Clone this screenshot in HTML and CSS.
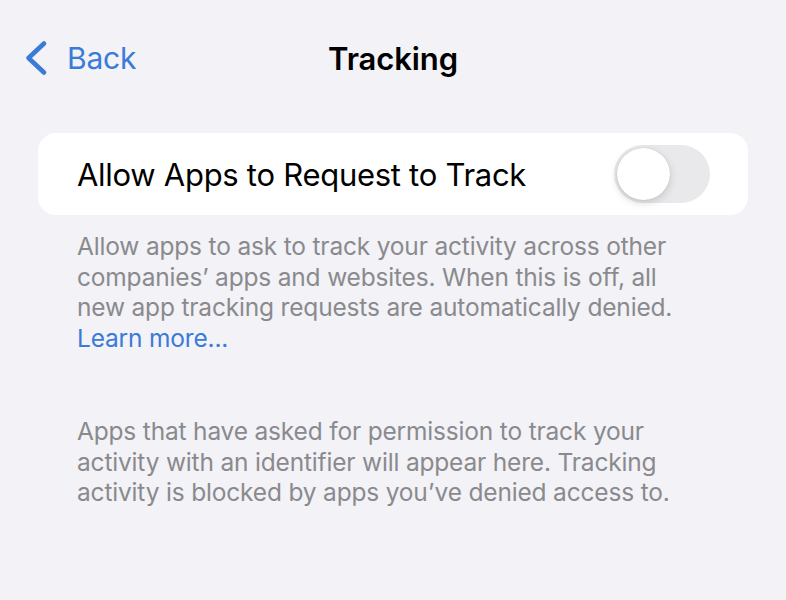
FILE: index.html
```html
<!DOCTYPE html>
<html lang="en">

<head>
	<meta charset="UTF-8">
	<meta name="viewport" content="width=device-width, initial-scale=1.0">
	<title>Tracking</title>
	<link rel="stylesheet" href="styles.css">
</head>

<body>
	<div class="nav">
		<a class="back" href="#">
			<svg class="chevron" width="24" height="36" viewBox="0 0 24 36">
				<polyline points="20,3.5 4.5,18 20,32.5" fill="none" stroke="currentColor" stroke-width="4.6"
					stroke-linecap="round" stroke-linejoin="round" />
			</svg>
			<span>Back</span>
		</a>
		<h1>Tracking</h1>
		<div></div>
	</div>

	<div class="group">
		<div class="row">
			<span class="label">Allow Apps to Request to Track</span>
			<div class="toggle">
				<div class="knob"></div>
			</div>
		</div>
	</div>

	<p class="footer">Allow apps to ask to track your activity across other companies’ apps and websites. When this
		is off, all new app tracking requests are automatically denied.<br><a href="#">Learn more...</a></p>

	<p class="footer footer-apps">Apps that have asked for permission to track your activity with an identifier will
		appear here. Tracking activity is blocked by apps you’ve denied access to.</p>
</body>

</html>
```

FILE: styles.css
```css
* {
	margin: 0;
	padding: 0;
	box-sizing: border-box;
}

html,
body {
	min-height: 100vh;
	font-family: Inter, 'Noto Sans', sans-serif;
}

body {
	background: #f2f2f7;
	color: #000;
}

a {
	text-decoration: none;
	color: #3a7bd8;
}

.nav {
	display: grid;
	grid-template-columns: 1fr auto 1fr;
	align-items: center;
	height: 116px;
	padding: 0 24px;
}

.back {
	display: flex;
	align-items: center;
	gap: 19px;
	font-size: 30px;
	letter-spacing: -0.2px;
}

.chevron {
	display: block;
}

h1 {
	font-size: 31px;
	font-weight: 600;
	letter-spacing: -0.1px;
	text-align: center;
}

.group {
	margin: 17px 38px 0 38px;
	background: #fff;
	border-radius: 18px;
}

.row {
	display: flex;
	align-items: center;
	justify-content: space-between;
	height: 82px;
	padding: 0 38px 0 39px;
}

.label {
	font-size: 31px;
	letter-spacing: -0.28px;
}

.toggle {
	width: 96px;
	height: 58px;
	border-radius: 29px;
	background: #e9e9eb;
	padding: 3px;
}

.knob {
	width: 53px;
	height: 52px;
	border-radius: 50%;
	background: #fff;
	box-shadow: 0 3px 8px rgba(0, 0, 0, 0.15), 0 0 1px rgba(0, 0, 0, 0.2);
}

.footer {
	margin: 16px 0 0 77px;
	width: 600px;
	font-size: 24.5px;
	line-height: 30.5px;
	color: #8a8a8e;
	letter-spacing: -0.18px;
}

.footer-apps {
	margin-top: 63px;
}
```
